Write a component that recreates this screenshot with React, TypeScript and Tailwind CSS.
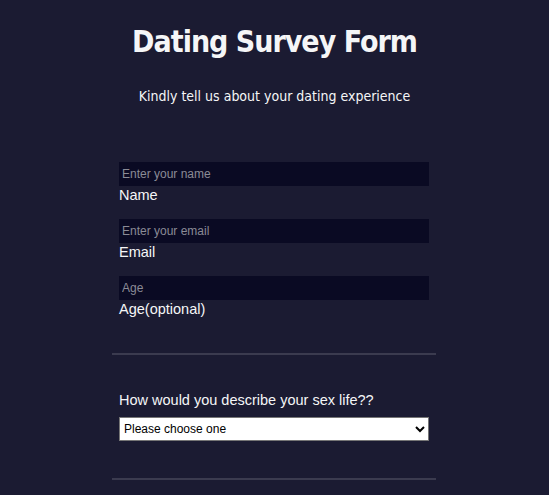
export default function App() {
  return (
    <div className="min-h-[495px] w-full bg-[#1b1b32] text-[#f5f6f7] overflow-hidden" style={{ fontFamily: '"DejaVu Sans Condensed", "DejaVu Sans", sans-serif' }}>
      <h1 className="text-center text-[30px] font-bold leading-none pt-[27px] tracking-[-1px]">Dating Survey Form</h1>
      <p className="text-center text-[14px] leading-none mt-[32px]">Kindly tell us about your dating experience</p>
      <form className="ml-[112px] w-[324px] mt-[59px]" style={{ fontFamily: '"Liberation Sans", Arial, sans-serif' }}>
        <div className="px-[7px]">
          <input className="block w-[310px] h-[24px] bg-[#0a0a23] px-[3px] text-[12px] text-[#f5f6f7] placeholder:text-[#8b8b96] outline-none" placeholder="Enter your name" />
          <label className="block text-[14.5px] leading-[19px]">Name</label>
          <input className="block w-[310px] h-[24px] mt-[14px] bg-[#0a0a23] px-[3px] text-[12px] text-[#f5f6f7] placeholder:text-[#8b8b96] outline-none" placeholder="Enter your email" />
          <label className="block text-[14.5px] leading-[19px]">Email</label>
          <input className="block w-[310px] h-[24px] mt-[14px] bg-[#0a0a23] px-[3px] text-[12px] text-[#f5f6f7] placeholder:text-[#8b8b96] outline-none" placeholder="Age" />
          <label className="block text-[14.5px] leading-[19px]">Age(optional)</label>
        </div>
        <div className="h-[2px] bg-[#3b3b4f] mt-[34px]"></div>
        <div className="px-[7px] pt-[35px]">
          <label className="block text-[14.5px] leading-[20px]">How would you describe your sex life??</label>
          <select className="block w-[310px] h-[24px] mt-[7px] bg-white text-black text-[12px] border border-[#767676] pl-0 pr-[1px] outline-none">
            <option>Please choose one</option>
          </select>
        </div>
        <div className="h-[2px] bg-[#3b3b4f] mt-[37px]"></div>
      </form>
    </div>
  );
}
